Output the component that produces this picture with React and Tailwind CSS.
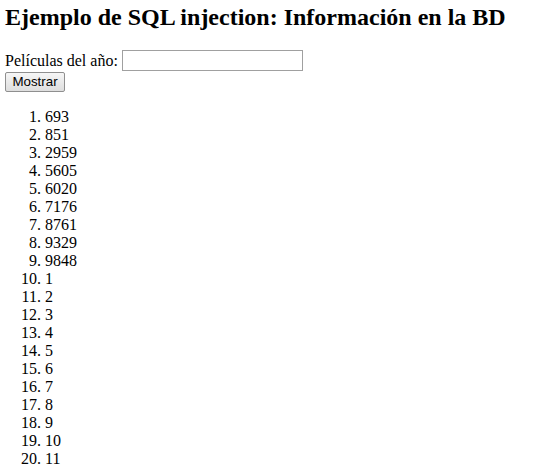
const years = [693, 851, 2959, 5605, 6020, 7176, 8761, 9329, 9848, 1, 2, 3, 4, 5, 6, 7, 8, 9, 10, 11];

export default function App() {
  return (
    <div className="min-h-[467px] bg-white px-[5px] pt-[4px] text-black font-['Liberation_Serif',serif] text-[16px] leading-[18px]">
      <h2 className="text-[24px] font-bold leading-[27px]">
        Ejemplo de SQL injection: Información en la BD
      </h2>

      {/* Form */}
      <form className="mt-[19px]" onSubmit={(e) => e.preventDefault()}>
        <div className="flex items-center h-[21px]">
          <span>Películas del año:</span>
          <input
            type="text"
            className="ml-[4px] w-[181px] h-[21px] border border-[#a0a0a0] bg-white px-[2px] text-[13px] font-['Liberation_Sans',sans-serif] outline-none"
          />
        </div>
        <button
          type="submit"
          className="mt-[1px] w-[60px] h-[20px] rounded-[2px] border border-[#8f8f8f] bg-gradient-to-b from-[#f6f6f6] to-[#dedede] text-[13.33px] leading-[16px] font-['Liberation_Sans',sans-serif] text-black"
        >
          Mostrar
        </button>
      </form>

      {/* Results */}
      <ol className="mt-[16px] list-decimal pl-10">
        {years.map((y, i) => (
          <li key={i} className="h-[18px]">
            {y}
          </li>
        ))}
      </ol>
    </div>
  );
}
